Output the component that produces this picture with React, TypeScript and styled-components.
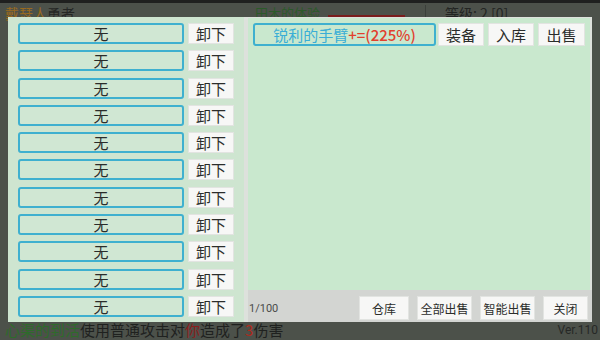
import React from "react";
import styled, { createGlobalStyle } from "styled-components";

const GlobalStyle = createGlobalStyle`
  html, body { margin: 0; padding: 0; }
  body {
    background: #4c514a;
    font-family: "Noto Sans CJK SC", "Noto Sans", sans-serif;
  }
`;

const Page = styled.div`
  position: relative;
  width: 600px;
  height: 340px;
  overflow: hidden;
  background: #4c514a;
  display: flex;
  flex-direction: column;
`;

const TopStrip = styled.div`
  height: 3px;
  background: #1f201f;
`;

const StatusRow = styled.div`
  height: 16px;
  display: flex;
  align-items: flex-start;
  font-size: 14px;
  line-height: 16px;
  color: #252725;
  padding: 2px 0 0 5px;
`;

const Name = styled.span<{ $c?: string }>`
  color: ${(p) => p.$c || "#252725"};
`;

const HpArea = styled.div`
  margin-left: 180px;
  width: 150px;
  display: flex;
  align-items: flex-end;
  gap: 8px;
  height: 14px;
`;

const HpLabel = styled.span`
  color: #2c5a2a;
  font-size: 13px;
  line-height: 13px;
`;

const HpBar = styled.div`
  flex: 1;
  height: 4px;
  background: #7a1c1c;
`;

const Divider = styled.div`
  width: 1px;
  height: 16px;
  background: #3b3f3a;
  margin-left: 20px;
`;

const Level = styled.span`
  margin-left: 19px;
  color: #232523;
`;

const Middle = styled.div`
  flex: 1;
`;

const LogRow = styled.div`
  height: 21px;
  display: flex;
  align-items: center;
  padding: 0 2px 0 5px;
  font-size: 15px;
  line-height: 15px;
  color: #1f211f;
  margin-top: -2px;
`;

const LogText = styled.div`
  flex: 1;
`;

const Version = styled.span`
  font-family: "Roboto", "Liberation Sans", sans-serif;
  font-size: 12px;
  color: #262826;
  margin-top: 2px;
`;

const Dialog = styled.div`
  position: absolute;
  left: 8px;
  top: 17px;
  width: 584px;
  height: 305px;
  background: #dde1dc;
  display: grid;
  grid-template-columns: 236px 1fr;
  column-gap: 4px;
`;

const LeftPanel = styled.div`
  background: #cee5d0;
  padding: 6px 8px 0 10px;
  display: flex;
  flex-direction: column;
  gap: 6.3px;
`;

const SlotRow = styled.div`
  display: flex;
  gap: 4px;
  height: 21px;
`;

const SlotBox = styled.div`
  width: 166px;
  box-sizing: border-box;
  border: 2px solid #3fb0cf;
  border-radius: 3px;
  background: #d0e7d3;
  display: flex;
  align-items: center;
  justify-content: center;
  font-size: 15px;
  color: #2a2c2a;
`;

const Btn = styled.button<{ $w: number }>`
  width: ${(p) => p.$w}px;
  box-sizing: border-box;
  padding: 0;
  border: 1px solid #e2e4e1;
  background: #f7f7f6;
  font-family: "Noto Sans CJK SC", "Noto Sans", sans-serif;
  font-size: 15px;
  color: #2b2d2b;
  display: flex;
  align-items: center;
  justify-content: center;
`;

const RightCol = styled.div`
  display: flex;
  flex-direction: column;
`;

const RightPanel = styled.div`
  flex: 1;
  background: #c9e8ce;
  margin-top: 1px;
  margin-right: 2px;
  padding: 5px 4px 0 5px;
`;

const ItemBar = styled.div`
  display: flex;
  gap: 4px;
  height: 23px;
`;

const ItemName = styled.div`
  width: 183px;
  box-sizing: border-box;
  border: 2px solid #3fb0cf;
  border-radius: 3px;
  display: flex;
  align-items: center;
  justify-content: center;
  font-size: 15px;
  color: #3aaed6;
  margin-right: -2px;
`;

const Red = styled.span`
  color: #e2402e;
  font-weight: 500;
`;

const BottomBar = styled.div`
  height: 32px;
  display: flex;
  align-items: center;
  padding: 4px 4px 0 1px;
  box-sizing: border-box;
  background: #d3d5d2;
  gap: 8px;
`;

const Count = styled.span`
  font-family: "Roboto", "Liberation Sans", sans-serif;
  font-size: 11px;
  color: #4a4c4a;
  flex: 1;
`;

const SmallBtn = styled(Btn)`
  height: 24px;
  font-size: 12px;
`;

const slots = Array.from({ length: 11 }, (_, i) => i);

export default function App() {
  return (
    <>
      <GlobalStyle />
      <Page>
        <TopStrip />
        <StatusRow>
          <Name $c="#9a6a1e">戴瑟人</Name>
          <Name>勇者</Name>
          <HpArea>
            <HpLabel>田木的体验</HpLabel>
            <HpBar />
          </HpArea>
          <Divider />
          <Level>等级: 2 [0]</Level>
        </StatusRow>
        <Middle />
        <LogRow>
          <LogText>
            <Name $c="#2e6b2b">心渠的到活</Name>
            使用普通攻击对<Name $c="#8a1e1e">你</Name>造成了<Name $c="#b02a1e">3</Name>伤害
          </LogText>
          <Version>Ver.110</Version>
        </LogRow>

        <Dialog>
          <LeftPanel>
            {slots.map((i) => (
              <SlotRow key={i}>
                <SlotBox>无</SlotBox>
                <Btn $w={46}>卸下</Btn>
              </SlotRow>
            ))}
          </LeftPanel>
          <RightCol>
            <RightPanel>
              <ItemBar>
                <ItemName>
                  锐利的手臂<Red>+=(225%)</Red>
                </ItemName>
                <Btn $w={46}>装备</Btn>
                <Btn $w={46}>入库</Btn>
                <Btn $w={47}>出售</Btn>
              </ItemBar>
            </RightPanel>
            <BottomBar>
              <Count>1/100</Count>
              <SmallBtn $w={50}>仓库</SmallBtn>
              <SmallBtn $w={55}>全部出售</SmallBtn>
              <SmallBtn $w={55}>智能出售</SmallBtn>
              <SmallBtn $w={45}>关闭</SmallBtn>
            </BottomBar>
          </RightCol>
        </Dialog>
      </Page>
    </>
  );
}
